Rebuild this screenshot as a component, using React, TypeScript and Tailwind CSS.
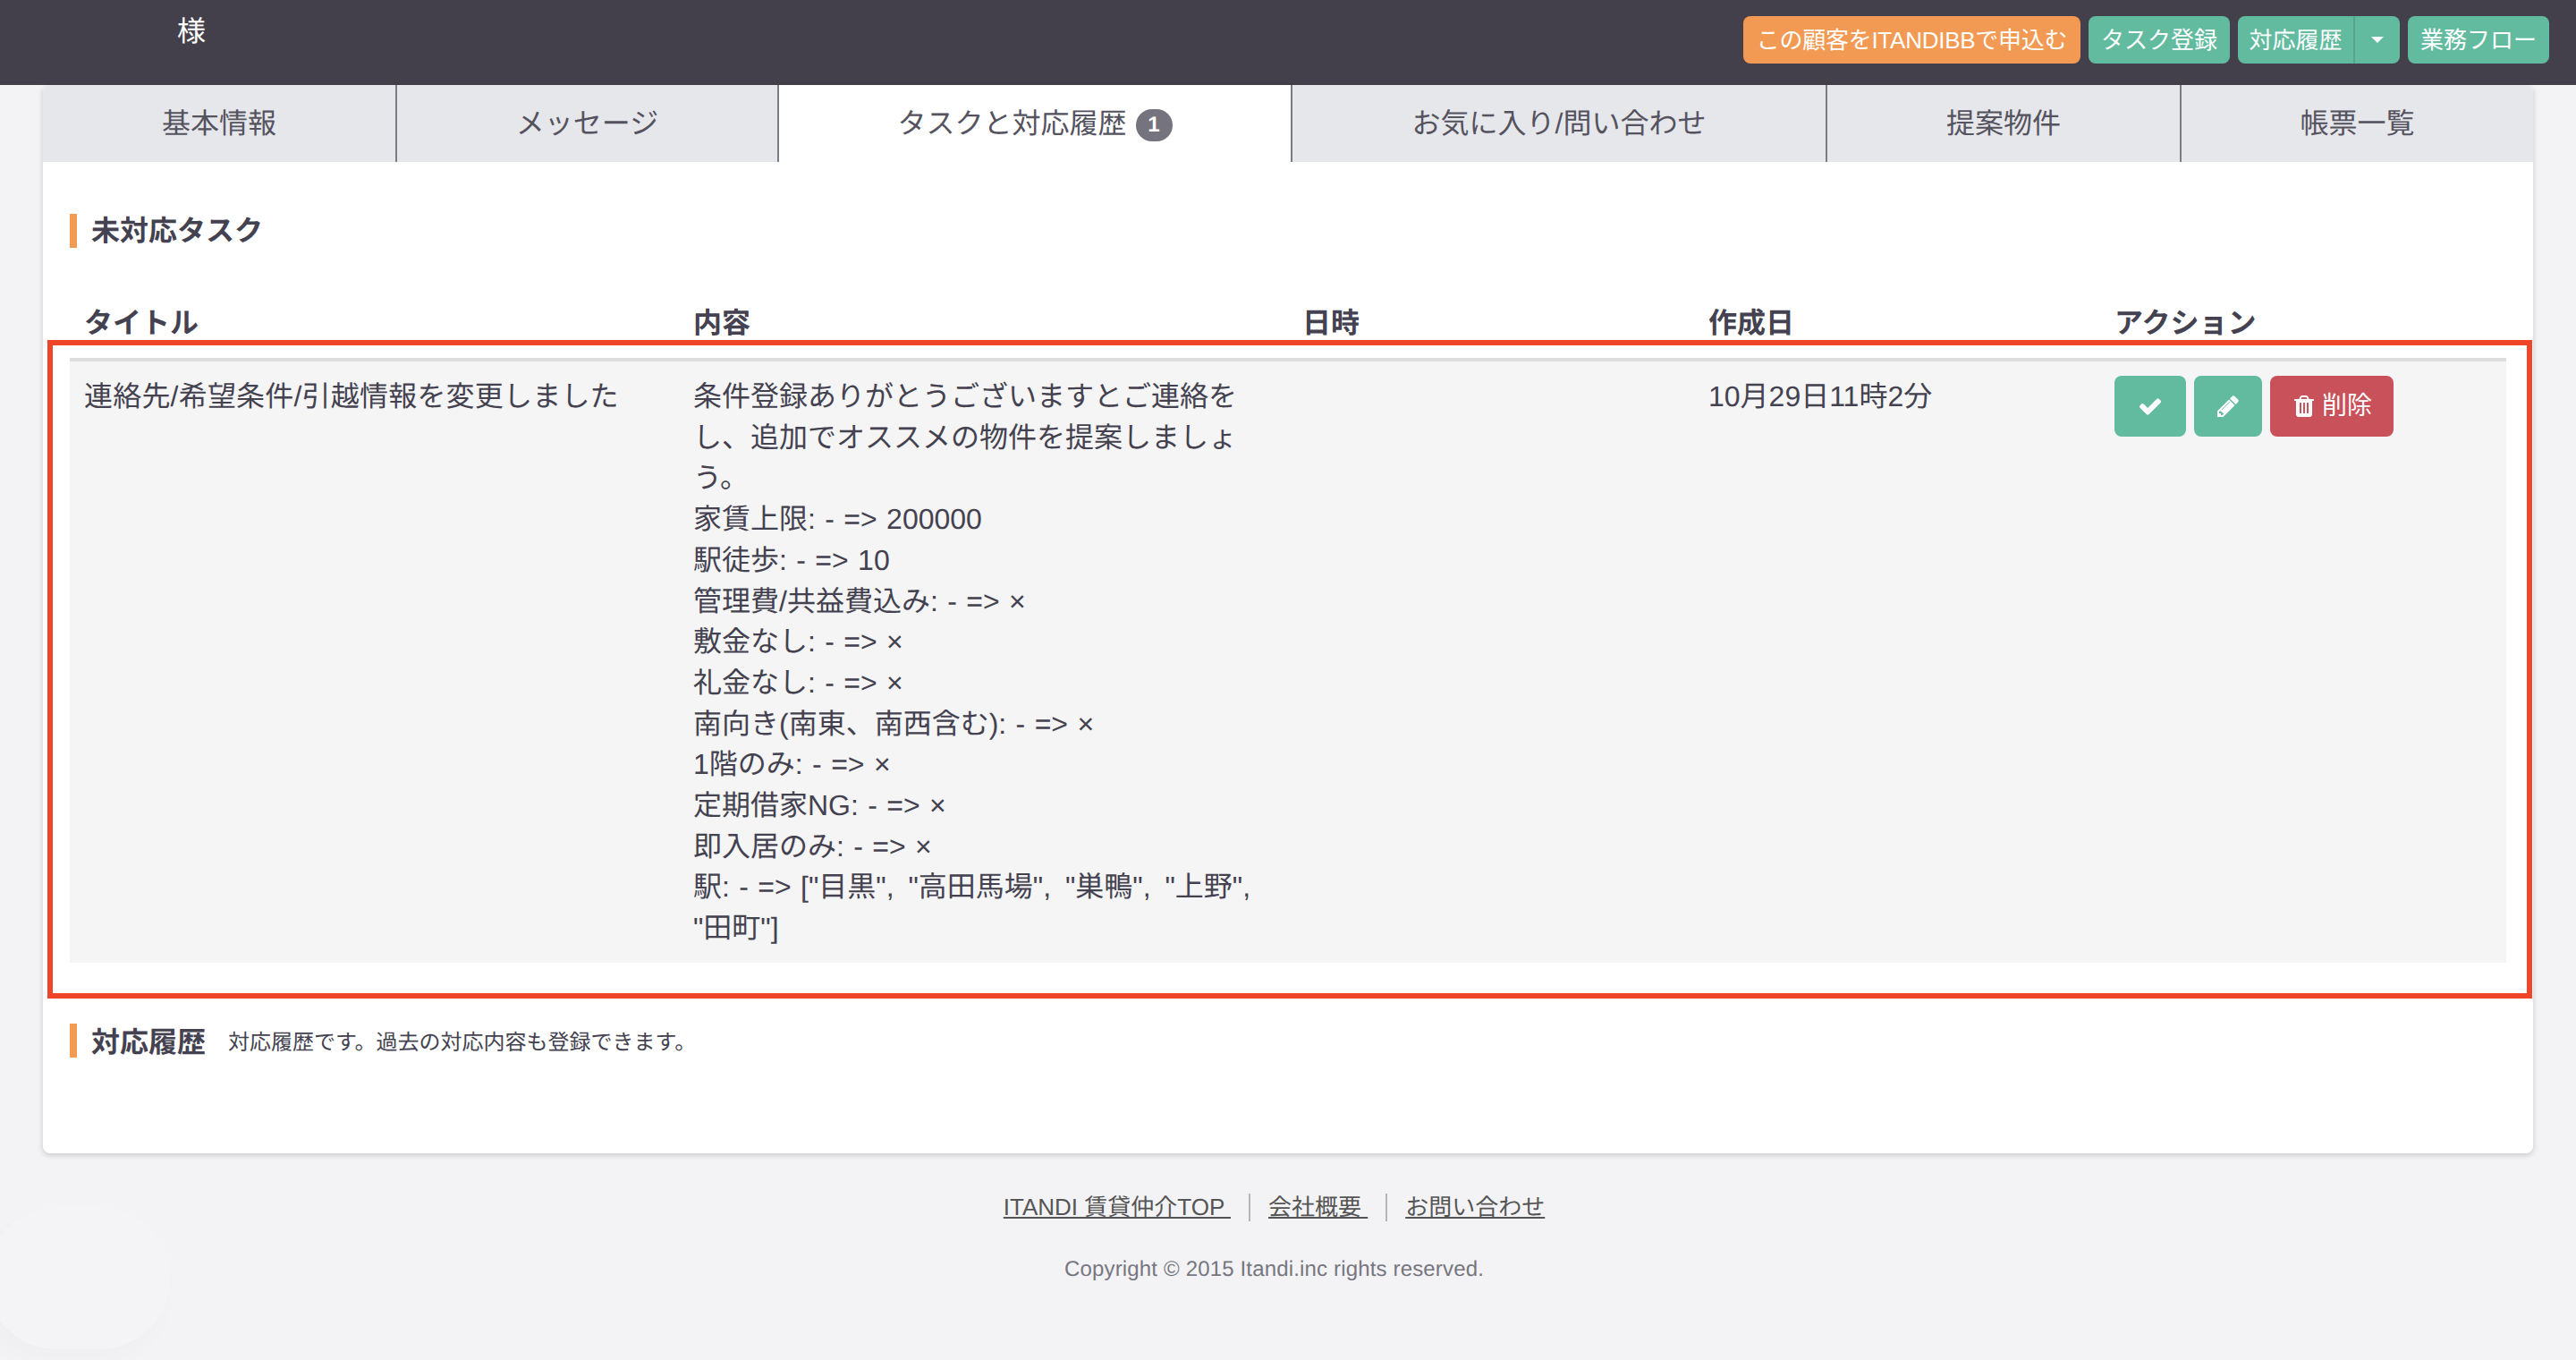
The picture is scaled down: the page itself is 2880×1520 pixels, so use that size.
import type { ReactNode } from "react";

const PENCIL = "M491 1536l91-91-235-235-91 91v107h128v128h107zm523-928q0-22-22-22-10 0-17 7l-542 542q-7 7-7 17 0 22 22 22 10 0 17-7l542-542q7-7 7-17zm-54-192l416 416-832 832H128v-416zm683 96q0 53-37 90l-166 166-416-416 166-165q36-38 90-38 53 0 91 38l235 234q37 39 37 91z";
const TRASH = "M704 1376v-704q0-14-9-23t-23-9h-64q-14 0-23 9t-9 23v704q0 14 9 23t23 9h64q14 0 23-9t9-23zm256 0v-704q0-14-9-23t-23-9h-64q-14 0-23 9t-9 23v704q0 14 9 23t23 9h64q14 0 23-9t9-23zm256 0v-704q0-14-9-23t-23-9h-64q-14 0-23 9t-9 23v704q0 14 9 23t23 9h64q14 0 23-9t9-23zm-544-992h448l-48-117q-7-9-17-11h-317q-10 2-17 11zm928 32v64q0 14-9 23t-23 9h-96v948q0 83-47 143.5t-113 60.5h-832q-66 0-113-58.5t-47-141.5v-952h-96q-14 0-23-9t-9-23v-64q0-14 9-23t23-9h309l70-167q15-37 54-63t79-26h320q40 0 79 26t54 63l70 167h309q14 0 23 9t9 23z";
const CHECK = "M1671 566q0 40-28 68l-724 724-136 136q-28 28-68 28t-68-28l-136-136-362-362q-28-28-28-68t28-68l136-136q28-28 68-28t68 28l294 295 656-657q28-28 68-28t68 28l136 136q28 28 28 68z";

function Fa({ d, size }: { d: string; size: string }) {
  return (
    <svg viewBox="0 0 1792 1792" className={size} fill="currentColor" aria-hidden="true">
      <path d={d} />
    </svg>
  );
}

const tabs = [
  { label: "基本情報", w: "w-[396px]" },
  { label: "メッセージ", w: "w-[427px]" },
  { label: "タスクと対応履歴", w: "w-[574px]", active: true, badge: "1" },
  { label: "お気に入り/問い合わせ", w: "w-[598px]" },
  { label: "提案物件", w: "w-[396px]" },
  { label: "帳票一覧", w: "flex-1", last: true },
];

const contentLines = [
  "条件登録ありがとうございますとご連絡をし、追加でオススメの物件を提案しましょう。",
  "家賃上限: - => 200000",
  "駅徒歩: - => 10",
  "管理費/共益費込み: - => ×",
  "敷金なし: - => ×",
  "礼金なし: - => ×",
  "南向き(南東、南西含む): - => ×",
  "1階のみ: - => ×",
  "定期借家NG: - => ×",
  "即入居のみ: - => ×",
];

function HeaderButton({ children, color = "bg-[#62bb9f]", w }: { children: ReactNode; color?: string; w: string }) {
  return (
    <button className={`${w} h-[53px] rounded-[8px] ${color} text-white text-[26px] leading-[36px] flex items-center justify-center`}>
      {children}
    </button>
  );
}

function SectionTitle({ children }: { children: ReactNode }) {
  return (
    <div className="h-[38px] border-l-[8px] border-[#f29b52] pl-[16px] flex items-center text-[32px] font-bold leading-[38px] text-[#444250]">
      {children}
    </div>
  );
}

export default function App() {
  return (
    <div className="relative w-full min-h-[1520px] overflow-hidden bg-[#f3f3f6] text-[#444250] [text-rendering:geometricPrecision] font-['Liberation_Sans','Noto_Sans_CJK_JP',sans-serif]">
      <div className="absolute left-[-16px] top-[1350px] w-[206px] h-[158px] rounded-full bg-[#f4f4f6] shadow-[-8px_14px_30px_rgba(0,0,0,0.02)]" />

      <header className="relative h-[95px] bg-[#43404b] flex justify-between pr-[30px]">
        <div className="pl-[198px] pt-[12px] text-[32px] leading-[46px] text-white">様</div>
        <div className="flex items-start gap-[9px] pt-[18px]">
          <HeaderButton color="bg-[#f29a53] tracking-[-0.25px]" w="w-[377px]">この顧客をITANDIBBで申込む</HeaderButton>
          <HeaderButton w="w-[158px]">タスク登録</HeaderButton>
          <div className="flex w-[181px] h-[53px] rounded-[8px] bg-[#62bb9f] text-white text-[26px] leading-[36px]">
            <div className="w-[131px] flex items-center justify-center border-r-[2px] border-[#55a88e]">対応履歴</div>
            <div className="flex-1 flex items-center justify-center">
              <div className="w-0 h-0 border-x-[7px] border-x-transparent border-t-[7px] border-t-white" />
            </div>
          </div>
          <HeaderButton w="w-[158px]">業務フロー</HeaderButton>
        </div>
      </header>

      <main className="relative mx-[48px] bg-white rounded-[8px] shadow-[0_2px_6px_rgba(0,0,0,0.18)]">
        <nav className="flex h-[86px]">
          {tabs.map((t, i) => (
            <div
              key={t.label}
              className={`${t.w} flex items-center justify-center text-[32px] leading-[46px] ${t.active ? "bg-white" : "bg-[#e6e7eb]"} ${t.last ? "" : "border-r-[2px] border-[#7c7c85]"} ${i === 0 ? "rounded-tl-[8px]" : ""} ${t.last ? "rounded-tr-[8px]" : ""} text-[#55535f]`}
            >
              {t.label}
              {t.badge && (
                <span className="ml-[10px] mt-[4px] w-[41px] h-[36px] rounded-full bg-[#75737d] text-white text-[24px] font-bold flex items-center justify-center leading-none">
                  {t.badge}
                </span>
              )}
            </div>
          ))}
        </nav>

        <div className="px-[30px] pt-[58px] pb-[107px]">
          <SectionTitle>未対応タスク</SectionTitle>

          <table className="mt-[45px] w-full table-fixed border-collapse text-[32px] leading-[45.71px] text-left">
            <thead>
              <tr className="leading-[46px]">
                <th className="w-[681px] p-[16px] font-bold">タイトル</th>
                <th className="w-[681px] p-[16px] font-bold">内容</th>
                <th className="w-[454px] p-[16px] font-bold">日時</th>
                <th className="w-[454px] p-[16px] font-bold">作成日</th>
                <th className="w-[454px] p-[16px] font-bold">アクション</th>
              </tr>
            </thead>
            <tbody>
              <tr className="bg-[#f5f5f5] border-t-[4px] border-[#dddddd] align-top">
                <td className="px-[16px] pt-[17px] pb-[15px] tracking-[0.2px]">連絡先/希望条件/引越情報を変更しました</td>
                <td className="px-[16px] pt-[17px] pb-[15px] [word-spacing:1.5px]">
                  {contentLines.map((l) => (
                    <div key={l}>{l}</div>
                  ))}
                  <div>
                    駅: - =&gt; <span className="[word-spacing:7px]">["目黒", "高田馬場", "巣鴨", "上野", "田町"]</span>
                  </div>
                </td>
                <td className="p-[16px]" />
                <td className="px-[16px] pt-[17px] pb-[15px]">10月29日11時2分</td>
                <td className="p-[16px]">
                  <div className="flex gap-[9px]">
                    <button className="w-[80px] h-[68px] rounded-[8px] bg-[#62bb9f] text-white flex items-center justify-center">
                      <Fa d={CHECK} size="w-[28px] h-[28px]" />
                    </button>
                    <button className="w-[76px] h-[68px] rounded-[8px] bg-[#62bb9f] text-white flex items-center justify-center">
                      <Fa d={PENCIL} size="w-[28px] h-[28px]" />
                    </button>
                    <button className="w-[138px] h-[68px] rounded-[8px] bg-[#c9515a] text-white text-[28px] flex items-center justify-center gap-[6px]">
                      <Fa d={TRASH} size="w-[28px] h-[28px]" />
                      削除
                    </button>
                  </div>
                </td>
              </tr>
            </tbody>
          </table>

          <div className="mt-[68px]">
            <SectionTitle>
              <span className="mt-[4px]">対応履歴</span>
              <span className="ml-[25px] mt-[6px] text-[24px] font-normal">対応履歴です。過去の対応内容も登録できます。</span>
            </SectionTitle>
          </div>
        </div>

        <div className="absolute left-[5px] top-[285px] w-[2778px] h-[736px] border-[6px] border-[#ef4528] pointer-events-none" />
      </main>

      <footer className="relative pt-[45px] pr-[31px] text-center">
        <div className="flex items-center justify-center text-[26px] leading-[31px] text-[#555555]">
          <a className="whitespace-pre pr-[20px] border-r-[2px] border-[#b5b5b8]">
            <span className="underline">ITANDI 賃貸仲介TOP </span>
          </a>
          <a className="whitespace-pre px-[20px] border-r-[2px] border-[#b5b5b8]">
            <span className="underline">会社概要 </span>
          </a>
          <a className="whitespace-pre pl-[20px]">
            <span className="underline">お問い合わせ</span>
          </a>
        </div>
        <p className="mt-[37px] text-[24px] leading-[34px] tracking-[0.16px] text-[#76767f]">Copyright © 2015 Itandi.inc rights reserved.</p>
      </footer>
    </div>
  );
}
